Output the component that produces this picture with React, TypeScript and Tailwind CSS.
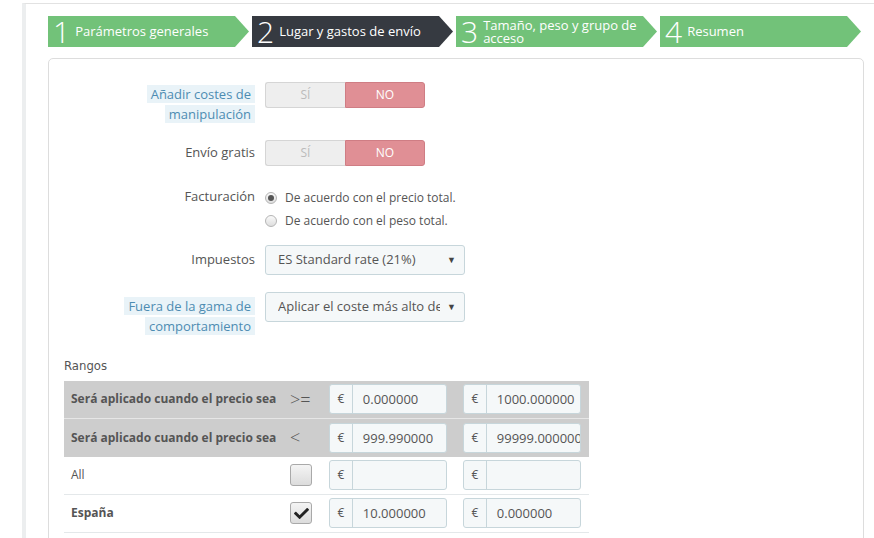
import { FaCheck } from "react-icons/fa";

const steps = [
  { n: "1", label: "Parámetros generales", active: false },
  { n: "2", label: "Lugar y gastos de envío", active: true },
  { n: "3", label: "Tamaño, peso y grupo de acceso", active: false },
  { n: "4", label: "Resumen", active: false },
];

function Switch() {
  return (
    <div className="flex h-[26px] w-[160px] text-[12px]">
      <div className="flex w-[80px] items-center justify-center rounded-l-[3px] border border-r-0 border-[#d5d5d5] bg-[#eeeeee] text-[#bbbbbb]">
        SÍ
      </div>
      <div className="flex w-[80px] items-center justify-center rounded-r-[3px] border border-[#cf7d84] bg-[#e08f95] text-white">
        NO
      </div>
    </div>
  );
}

function Radio({ checked, label }: { checked?: boolean; label: string }) {
  return (
    <div className="flex h-[23px] items-center gap-[8px] text-[12px] text-[#555]">
      <span className="flex h-[12px] w-[12px] items-center justify-center rounded-full border border-[#b5b5b5] bg-gradient-to-b from-[#fafafa] to-[#dedede]">
        {checked && <span className="h-[6px] w-[6px] rounded-full bg-[#555]" />}
      </span>
      {label}
    </div>
  );
}

function Select({ value }: { value: string }) {
  return (
    <div className="flex h-[30px] w-[200px] items-center rounded-[3px] border border-[#c7d6db] bg-[#f5f8f9] pl-[12px] pr-[8px] text-[13px] text-[#555]">
      <span className="w-[162px] overflow-hidden whitespace-nowrap">{value}</span>
      <span className="ml-auto text-[9px] text-[#444]">▼</span>
    </div>
  );
}

function Money({ value }: { value?: string }) {
  return (
    <div className="flex h-[30px] w-[118px] rounded-[3px] border border-[#c7d6db] bg-[#f5f8f9] text-[13px] text-[#555]">
      <span className="flex w-[23px] items-center justify-center border-r border-[#c7d6db] text-[12px]">€</span>
      <span className="w-[94px] overflow-hidden whitespace-nowrap pl-[10px] leading-[28px]">{value}</span>
    </div>
  );
}

function HelpLabel({ children }: { children: React.ReactNode }) {
  return (
    <span className="box-decoration-clone bg-[#e9f3f8] px-[4px] leading-[19px] text-[#4d8cb2]">
      {children}
    </span>
  );
}

function RangeRow({ op, from, to, last }: { op: string; from: string; to: string; last?: boolean }) {
  return (
    <div className={`flex h-[38px] items-center bg-[#cdcdcd] ${last ? "" : "border-b border-[#e6e6e6]"}`}>
      <div className="w-[221px] whitespace-nowrap pl-[7px] text-[12px] font-bold text-[#555]">Será aplicado cuando el precio sea</div>
      <div className="w-[37px] pl-[5px] text-[18px] font-light text-[#555]">{op}</div>
      <div className="w-[133px] pl-[7px]">
        <Money value={from} />
      </div>
      <div className="w-[134px] pl-[8px]">
        <Money value={to} />
      </div>
    </div>
  );
}

function ZoneRow({ name, checked, from, to }: { name: string; checked?: boolean; from?: string; to?: string }) {
  return (
    <div className="flex h-[38px] items-center border-b border-[#e4e8ea]">
      <div className={`w-[221px] pl-[7px] text-[12px] text-[#555] ${checked ? "font-bold" : ""}`}>{name}</div>
      <div className="w-[37px] pl-[5px]">
        <span className="flex h-[22px] w-[22px] items-center justify-center rounded-[3px] border border-[#a9a9a9] bg-gradient-to-b from-[#f4f4f4] to-[#dcdcdc]">
          {checked && <FaCheck className="h-[15px] w-[15px] text-[#222]" />}
        </span>
      </div>
      <div className="w-[133px] pl-[7px]">
        <Money value={from} />
      </div>
      <div className="w-[134px] pl-[8px]">
        <Money value={to} />
      </div>
    </div>
  );
}

export default function App() {
  return (
    <div
      className="h-[538px] w-[874px] overflow-hidden bg-white"
      style={{ fontFamily: '"Open Sans", "Liberation Sans", sans-serif' }}
    >
      <div className="ml-[22px] mt-[3px] h-[600px] border-l-[4px] border-t border-[#eceeef] border-t-[#e2e2e2] pl-[22px] pt-[12px]">
        {/* steps */}
        <div className="flex gap-[3px]">
          {steps.map((s) => (
            <div
              key={s.n}
              className={`flex h-[31px] w-[201px] items-center pl-[5px] text-white ${s.active ? "bg-[#363a41]" : "bg-[#72c279]"}`}
              style={{ clipPath: "polygon(0 0, calc(100% - 14px) 0, 100% 50%, calc(100% - 14px) 100%, 0 100%)" }}
            >
              <span className="mr-[5px] text-[30px] font-light leading-none">{s.n}</span>
              <span className="w-[170px] text-[13px] leading-[13px]">{s.label}</span>
            </div>
          ))}
        </div>

        {/* panel */}
        <div className="mt-[11px] h-[520px] w-[816px] rounded-[5px] border border-[#dddddd] pt-[23px] text-[13px] text-[#555]">
          <div className="flex items-start">
            <div className="w-[206px] pt-[3px] text-right">
              <HelpLabel>
                Añadir costes de
                <br />
                manipulación
              </HelpLabel>
            </div>
            <div className="ml-[10px]">
              <Switch />
            </div>
          </div>

          <div className="mt-[16px] flex items-center">
            <div className="w-[206px] text-right">Envío gratis</div>
            <div className="ml-[10px]">
              <Switch />
            </div>
          </div>

          <div className="mt-[20px] flex items-start">
            <div className="w-[206px] pt-[1px] text-right">Facturación</div>
            <div className="ml-[10px]">
              <Radio checked label="De acuerdo con el precio total." />
              <Radio label="De acuerdo con el peso total." />
            </div>
          </div>

          <div className="mt-[13px] flex items-center">
            <div className="w-[206px] text-right">Impuestos</div>
            <div className="ml-[10px]">
              <Select value="ES Standard rate (21%)" />
            </div>
          </div>

          <div className="mt-[17px] flex items-start">
            <div className="w-[206px] pt-[5px] text-right">
              <HelpLabel>
                Fuera de la gama de
                <br />
                comportamiento
              </HelpLabel>
            </div>
            <div className="ml-[10px]">
              <Select value="Aplicar el coste más alto de la" />
            </div>
          </div>

          <div className="px-[15px]">
            <div
              className="mt-[20px] mb-[5px] text-[13px] text-[#555]"
              style={{ fontFamily: '"Liberation Sans Narrow", "DejaVu Sans Condensed", sans-serif' }}
            >
              Rangos
            </div>
            <div className="w-[525px]">
              <RangeRow op=">=" from="0.000000" to="1000.000000" />
              <RangeRow op="<" from="999.990000" to="99999.000000" last />
              <ZoneRow name="All" />
              <ZoneRow name="España" checked from="10.000000" to="0.000000" />
            </div>
          </div>
        </div>
      </div>
    </div>
  );
}
